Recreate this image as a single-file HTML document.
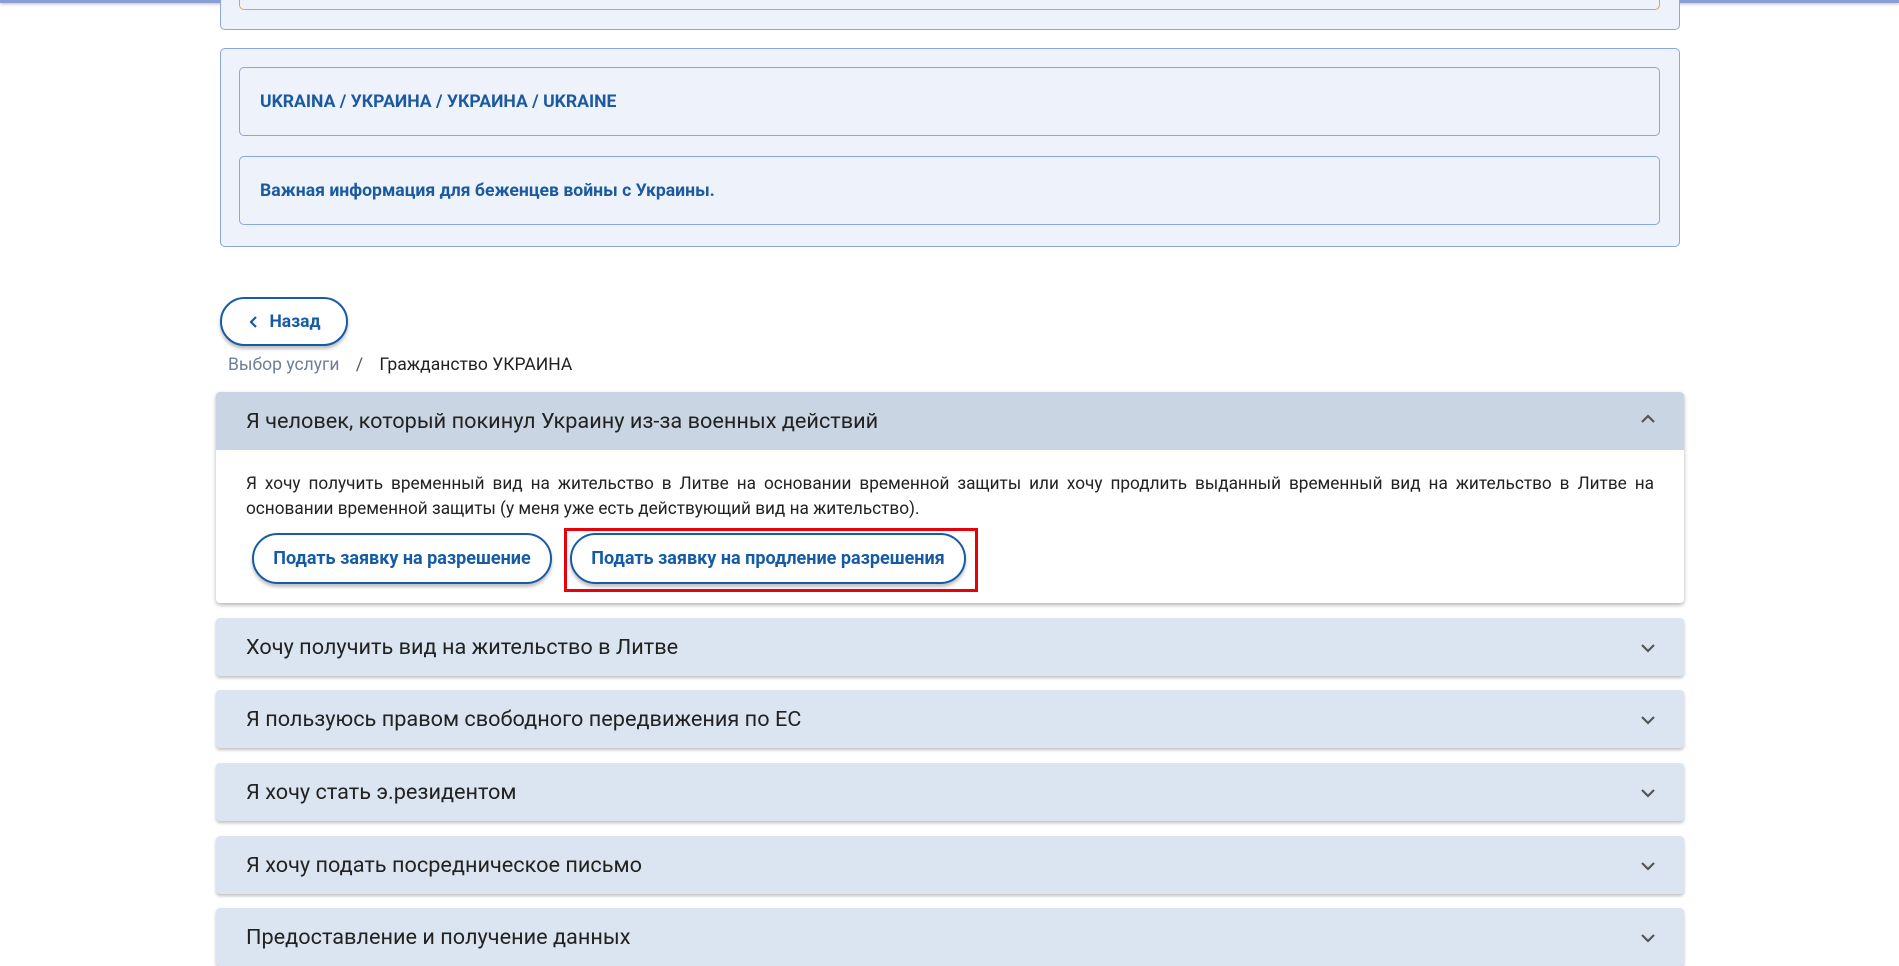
<!DOCTYPE html>
<html><head><meta charset="utf-8"><style>
*{box-sizing:border-box;margin:0;padding:0}
body{width:1899px;height:942px;overflow:hidden;background:#fff;font-family:"Roboto","Liberation Sans",sans-serif;position:relative;color:#222}
.abs{position:absolute}
.topbar{left:0;top:0;width:1899px;height:3px;background:#8a9ed6;box-shadow:0 1px 3px rgba(0,0,60,.3)}
.box{background:#edf2fb;border:1px solid #8aa7e0;border-radius:5px}
.inner{background:#edf2fb;border:1px solid #8aa7e0;border-radius:5px;color:#1c5aa0;font-weight:bold;font-size:17.6px;padding-left:20px;display:flex;align-items:center}
.btn{border:2px solid #165ba6;border-radius:30px;background:#fff;color:#165ba6;font-weight:bold;font-size:18px;display:flex;align-items:center;justify-content:center;box-shadow:0 3px 3px rgba(0,0,0,.25)}
.acc{left:216px;width:1468px;height:58px;background:#dbe5f1;border-radius:4px;box-shadow:0 2px 3px rgba(0,0,0,.25);font-size:21.7px;color:#222;padding-left:30px;display:flex;align-items:center}
.chev{position:absolute;right:28px;top:25px}
</style></head><body>
<div class="abs topbar"></div>
<div class="abs box" style="left:220px;top:-10px;width:1460px;height:40px"></div>
<div class="abs" style="left:239px;top:-10px;width:1421px;height:20px;border:1px solid #f39a4a;border-top:none;border-radius:0 0 5px 5px;background:#edf2fb"></div>
<div class="abs box" style="left:220px;top:48px;width:1460px;height:199px"></div>
<div class="abs inner" style="left:239px;top:67px;width:1421px;height:69px">UKRAINA / УКРАИНА / УКРАИНА / UKRAINE</div>
<div class="abs inner" style="left:239px;top:156px;width:1421px;height:69px">Важная информация для беженцев войны с Украины.</div>
<div class="abs btn" style="left:220px;top:297px;width:128px;height:49px;font-size:17.5px"><svg width="14" height="14" viewBox="0 0 14 14" style="margin-right:8px"><path d="M9 2 L4 7 L9 12" fill="none" stroke="#165ba6" stroke-width="2.2"/></svg>Назад</div>
<div class="abs" style="left:228px;top:355px;font-size:17.5px;color:#6f7f96">Выбор услуги <span style="color:#555;margin:0 12px">/</span> <span style="color:#222">Гражданство УКРАИНА</span></div>

<div class="abs" style="left:216px;top:392px;width:1468px;height:211px;background:#fff;border-radius:4px;box-shadow:0 2px 4px rgba(0,0,0,.3)"></div>
<div class="abs acc" style="top:392px;background:#c9d5e2;border-radius:4px 4px 0 0;box-shadow:none">Я человек, который покинул Украину из-за военных действий<svg class="chev" style="top:22px" width="16" height="10" viewBox="0 0 16 10"><path d="M2 8 L8 2 L14 8" fill="none" stroke="#555" stroke-width="2.2"/></svg></div>
<div class="abs" style="left:246px;top:472px;width:1408px;font-size:17.2px;line-height:25px;text-align:justify;color:#222">Я хочу получить временный вид на жительство в Литве на основании временной защиты или хочу продлить выданный временный вид на жительство в Литве на основании временной защиты (у меня уже есть действующий вид на жительство).</div>
<div class="abs btn" style="left:252px;top:533px;width:300px;height:51px">Подать заявку на разрешение</div>
<div class="abs btn" style="left:570px;top:533px;width:396px;height:51px">Подать заявку на продление разрешения</div>
<div class="abs" style="left:564px;top:528px;width:414px;height:64px;border:3px solid #e8000b"></div>

<div class="abs acc" style="top:618px">Хочу получить вид на жительство в Литве<svg class="chev" width="16" height="10" viewBox="0 0 16 10"><path d="M2 2 L8 8 L14 2" fill="none" stroke="#555" stroke-width="2.2"/></svg></div>
<div class="abs acc" style="top:690px">Я пользуюсь правом свободного передвижения по ЕС<svg class="chev" width="16" height="10" viewBox="0 0 16 10"><path d="M2 2 L8 8 L14 2" fill="none" stroke="#555" stroke-width="2.2"/></svg></div>
<div class="abs acc" style="top:763px">Я хочу стать э.резидентом<svg class="chev" width="16" height="10" viewBox="0 0 16 10"><path d="M2 2 L8 8 L14 2" fill="none" stroke="#555" stroke-width="2.2"/></svg></div>
<div class="abs acc" style="top:836px">Я хочу подать посредническое письмо<svg class="chev" width="16" height="10" viewBox="0 0 16 10"><path d="M2 2 L8 8 L14 2" fill="none" stroke="#555" stroke-width="2.2"/></svg></div>
<div class="abs acc" style="top:908px">Предоставление и получение данных<svg class="chev" width="16" height="10" viewBox="0 0 16 10"><path d="M2 2 L8 8 L14 2" fill="none" stroke="#555" stroke-width="2.2"/></svg></div>
</body></html>
